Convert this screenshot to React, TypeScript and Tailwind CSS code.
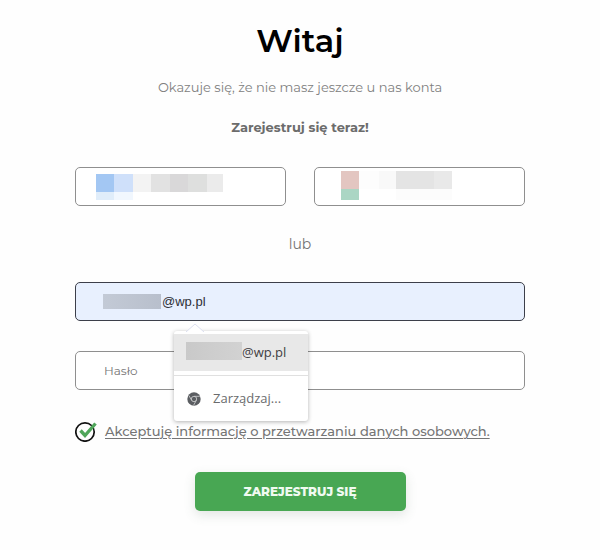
import React, { useState } from "react";

// Redacted content, shown as a strip of coloured blocks
const GoogleMosaic = () => (
  <svg className="h-[26px] w-[128px]" viewBox="0 0 128 26" shapeRendering="crispEdges" aria-hidden="true">
    <rect x="0" y="0" width="19" height="18" fill="#a3c7f3" />
    <rect x="18" y="0" width="19" height="18" fill="#cfe0fa" />
    <rect x="37" y="0" width="18" height="18" fill="#f3f3f3" />
    <rect x="55" y="0" width="19" height="18" fill="#e2e2e2" />
    <rect x="74" y="0" width="18" height="18" fill="#d9d8d9" />
    <rect x="92" y="0" width="19" height="18" fill="#dedfde" />
    <rect x="111" y="0" width="16" height="18" fill="#ebebeb" />
    <rect x="0" y="18" width="18" height="8" fill="#e0edfa" />
    <rect x="18" y="18" width="19" height="8" fill="#f1f7fe" />
  </svg>
);

const PartnerMosaic = () => (
  <svg className="h-[29px] w-[112px]" viewBox="0 0 112 29" shapeRendering="crispEdges" aria-hidden="true">
    <rect x="0" y="0" width="18" height="18" fill="#e3c6c1" />
    <rect x="0" y="18" width="18" height="11" fill="#abd6c4" />
    <rect x="18" y="0" width="20" height="18" fill="#fdfdfd" />
    <rect x="38" y="0" width="17" height="18" fill="#f9f9f9" />
    <rect x="55" y="0" width="38" height="18" fill="#e4e4e4" />
    <rect x="93" y="0" width="18" height="18" fill="#e9e9e9" />
    <rect x="55" y="18" width="56" height="11" fill="#fcfcfc" />
  </svg>
);

const ChromeIcon = () => (
  <svg className="size-[14px] shrink-0" viewBox="0 0 24 24" aria-hidden="true">
    <circle cx="12" cy="12" r="11.5" fill="#5b5e62" />
    <circle cx="12" cy="12" r="4.6" fill="none" stroke="#c9cacc" strokeWidth="1.5" />
    <path d="M12 7.4h10M8 14.3 3.2 6M16 14.3 11.2 23" fill="none" stroke="#c9cacc" strokeWidth="1.5" />
  </svg>
);

const CheckIcon = ({ checked }: { checked: boolean }) => (
  <svg className="size-[22px] shrink-0" viewBox="0 0 22 22" fill="none" aria-hidden="true">
    <circle cx="10" cy="12" r="9.2" stroke="#111" strokeWidth="1.7" />
    {checked && <path d="M5.5 10.5 10 15.5 20.5 3.5" stroke="#4fa55a" strokeWidth="3.4" />}
  </svg>
);

const fieldClass = "h-[39px] w-full rounded-[5px] border border-[#8f8f8f] outline-none";

export default function App() {
  const [email, setEmail] = useState("@wp.pl");
  const [accepted, setAccepted] = useState(true);

  return (
    <main className="min-h-screen bg-[#fefefe] pt-[21px] font-['Montserrat','Inter',sans-serif] text-[#757575]">
      <form
        className="mx-auto flex w-3/4 flex-col items-center"
        onSubmit={(e) => e.preventDefault()}
      >
        <h1 className="text-[32px] leading-10 font-semibold text-black">Witaj</h1>
        <p className="mt-4 text-[13px] leading-5 whitespace-nowrap text-[#808080]">
          Okazuje się, że nie masz jeszcze u nas konta
        </p>
        <p className="mt-5 text-[13px] leading-5 font-bold text-[#6c6c6c]">Zarejestruj się teraz!</p>

        <div className="mt-[30px] grid w-full grid-cols-2 gap-7">
          <button type="button" aria-label="Google" className={`${fieldClass} flex items-start bg-white pt-1.5 pl-5`}>
            <GoogleMosaic />
          </button>
          <button type="button" aria-label="Partner" className={`${fieldClass} flex items-start bg-white pt-[3px] pl-[26px]`}>
            <PartnerMosaic />
          </button>
        </div>

        <p className="mt-7 text-sm leading-5">lub</p>

        <div className="relative mt-7 w-full">
          <input
            type="text"
            aria-label="E-mail"
            value={email}
            onChange={(e) => setEmail(e.target.value)}
            className="block h-[39px] w-full rounded-[5px] border border-[#3c3f4a] bg-[#e8f0fe] pl-[86px] font-['Liberation_Sans',sans-serif] text-[13px] text-[#2d2f36] outline-none"
          />
          <span className="absolute top-3 left-7 h-[15px] w-[58px] bg-linear-to-r from-[#c3cad6] to-[#b8bfcc]" />

          {/* Autofill suggestions */}
          <div className="absolute top-[49px] left-[99px] z-10 w-[134px] rounded-[3px] bg-white pt-[3px] font-['Open_Sans',sans-serif] text-[13px] shadow-[0_1px_4px_rgba(0,0,0,0.3)]">
            <svg className="absolute -top-2 left-3 h-[9px] w-[18px]" viewBox="0 0 18 9" aria-hidden="true">
              <path d="M0 9 9 1l9 8" fill="#fff" stroke="#dcdff0" />
            </svg>
            <button type="button" className="flex h-[37px] w-full items-center bg-[#e8e8e8] pl-3 text-[#3f4043]">
              <span className="mb-1 h-[18px] w-14 bg-linear-to-r from-[#c9c9c9] to-[#d2d2d2]" />
              @wp.pl
            </button>
            <button
              type="button"
              className="mt-1 flex h-[46px] w-full items-center gap-3 border-t border-[#e0e0e0] pl-[13px] text-[#6a6b6d]"
            >
              <ChromeIcon />
              Zarządzaj...
            </button>
          </div>
        </div>

        <input
          type="password"
          aria-label="Hasło"
          placeholder="Hasło"
          className={`${fieldClass} mt-[30px] bg-white px-7 text-xs placeholder:text-[#757575]`}
        />

        <label className="relative mt-[30px] flex w-full items-center gap-2 text-[13px] leading-5 whitespace-nowrap">
          <input
            type="checkbox"
            checked={accepted}
            onChange={(e) => setAccepted(e.target.checked)}
            className="sr-only"
          />
          <CheckIcon checked={accepted} />
          <a href="#dane" className="font-medium underline underline-offset-2">
            Akceptuję informację o przetwarzaniu danych osobowych.
          </a>
        </label>

        <button
          type="submit"
          className="mt-[30px] h-[39px] w-[211px] rounded-[5px] bg-[#48a753] text-xs font-extrabold text-[#f0faf1] shadow-[0_4px_12px_rgba(72,100,80,0.16)]"
        >
          ZAREJESTRUJ SIĘ
        </button>
      </form>
    </main>
  );
}
